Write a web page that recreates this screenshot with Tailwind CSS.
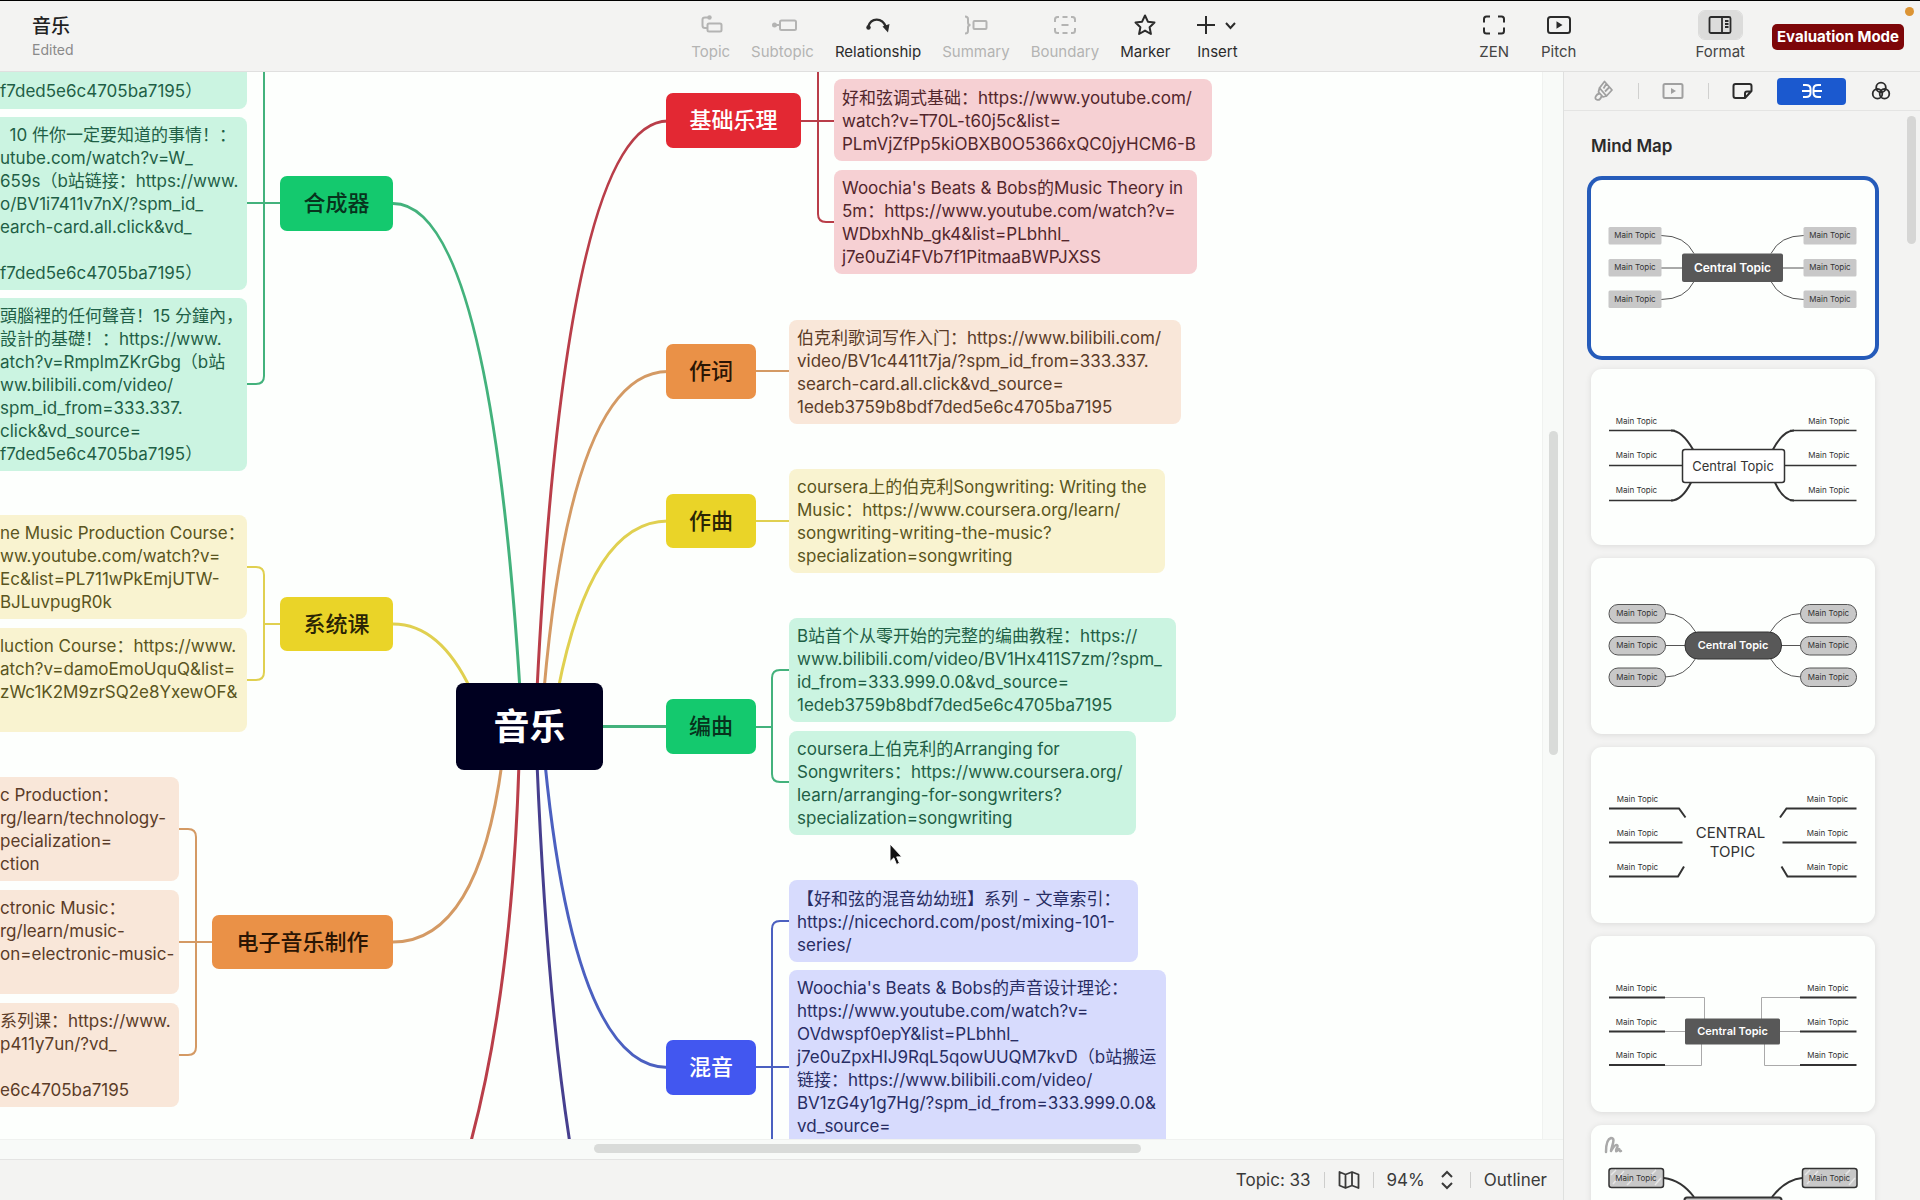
<!DOCTYPE html>
<html lang="zh-CN">
<head>
<meta charset="utf-8">
<meta name="viewport" content="width=device-width, initial-scale=1">
<title>音乐</title>
<script src="https://cdn.jsdelivr.net/npm/@tailwindcss/browser@4"></script>
</head>
<body class="flex h-screen flex-col overflow-hidden bg-[#f3f3f2] font-['Inter','Noto_Sans_CJK_SC',sans-serif] text-[#2b2b2b]">

<!-- Toolbar -->
<header class="relative flex h-[72px] shrink-0 items-start border-t border-b border-t-black border-b-[#e0e0df] pt-[10px]">
  <div class="w-[36%] pl-8">
    <h1 class="text-[19px] leading-8 font-medium text-[#222]">音乐</h1>
    <p class="text-sm leading-[14px] text-[#8a8a8a]">Edited</p>
  </div>
  <nav class="flex gap-[21px] text-[15px] leading-5">
    <button class="flex flex-col items-center gap-[3px] text-[#b4b4b3]" disabled>
      <svg class="h-7 w-7" viewBox="0 0 28 28" fill="none" stroke="currentColor" stroke-width="2"><rect x="10.500" y="12.500" width="14" height="8" rx="1.500"/><path d="M10.500 17H8Q5.500 17 5.500 14.500V8.500Q5.500 6.500 8 6.500H12.500"/><circle cx="12.500" cy="6.500" r="2.200" fill="currentColor" stroke="none"/></svg>
      Topic</button>
    <button class="flex flex-col items-center gap-[3px] text-[#b4b4b3]" disabled>
      <svg class="h-7 w-7" viewBox="0 0 28 28" fill="none" stroke="currentColor" stroke-width="2"><rect x="11" y="9.500" width="16" height="9.500" rx="1.500"/><path d="M5 14h6"/><circle cx="5.500" cy="14" r="2.500" fill="currentColor" stroke="none"/></svg>
      Subtopic</button>
    <button class="flex flex-col items-center gap-[3px]">
      <svg class="h-7 w-7" viewBox="0 0 28 28" fill="none" stroke="currentColor" stroke-width="2.200"><path d="M4 16C7 6.500 18 6 22 16"/><circle cx="4.500" cy="16.500" r="2.200" fill="currentColor" stroke="none"/><path d="M18.500 15.500l7-2.500-1.500 8.500z" fill="currentColor" stroke="none"/></svg>
      Relationship</button>
    <button class="flex flex-col items-center gap-[3px] text-[#b4b4b3]" disabled>
      <svg class="h-7 w-7" viewBox="0 0 28 28" fill="none" stroke="currentColor" stroke-width="2"><rect x="11.500" y="10" width="13" height="8" rx="1"/><path d="M3 5.500q3 0 3 2.500v3.500q0 2.500 2.500 2.500q-2.500 0-2.500 2.500V20q0 2.500-3 2.500"/></svg>
      Summary</button>
    <button class="flex flex-col items-center gap-[3px] text-[#b4b4b3]" disabled>
      <svg class="h-7 w-7" viewBox="0 0 28 28" fill="none" stroke="currentColor" stroke-width="2"><path d="M8 6H6.500Q4 6 4 8.500V11M11.500 6h5M20 6h1.500Q24 6 24 8.500V11M24 17v2.500q0 2.500-2.500 2.500H20M16.500 22h-5M8 22H6.500Q4 22 4 19.500V17M10.500 14h7"/></svg>
      Boundary</button>
    <button class="flex flex-col items-center gap-[3px]">
      <svg class="h-7 w-7" viewBox="0 0 28 28" fill="none" stroke="currentColor" stroke-width="2" stroke-linejoin="round"><path d="M14 4.500l2.900 6.200 6.600.8-4.900 4.700 1.300 6.800-5.900-3.400-5.900 3.400 1.300-6.800-4.900-4.700 6.600-.8z"/></svg>
      Marker</button>
    <button class="ml-1.5 flex flex-col items-center gap-[3px]">
      <svg class="h-7 w-10" viewBox="0 0 40 28" fill="none" stroke="currentColor" stroke-width="2"><path d="M0 14h18M9 5v18M29 12l4.500 5 4.500-5"/></svg>
      Insert</button>
  </nav>
  <div class="ml-auto flex text-[15px] leading-5">
    <button class="mr-8 flex flex-col items-center gap-[3px] text-[#444]">
      <svg class="h-7 w-7" viewBox="0 0 28 28" fill="none" stroke="#2b2b2b" stroke-width="2"><path d="M10 5.500H6.500Q4 5.500 4 8v3.500M18 5.500h3.500Q24 5.500 24 8v3.500M24 16.500V20q0 2.500-2.500 2.500H18M10 22.500H6.500Q4 22.500 4 20v-3.500"/></svg>
      ZEN</button>
    <button class="mr-[119px] flex flex-col items-center gap-[3px] text-[#444]">
      <svg class="h-7 w-7" viewBox="0 0 28 28" fill="none" stroke="#2b2b2b" stroke-width="2"><rect x="3" y="6" width="22" height="16" rx="2.500"/><path d="M11.500 10.200v7.600l6-3.800z" fill="#2b2b2b" stroke="none"/></svg>
      Pitch</button>
    <button class="mr-[27px] flex flex-col items-center gap-[3px] text-[#444]">
      <span class="flex h-7 w-[43px] items-center justify-center rounded-md bg-[#dcdcdb] outline outline-[#dcdcdb]">
      <svg class="h-7 w-7" viewBox="0 0 28 28" fill="none" stroke="#2b2b2b" stroke-width="1.800"><rect x="3.500" y="6" width="21" height="16" rx="1.500"/><path d="M16 6v16M19 10h3.500M19 13h3.500M19 16h3.500" /></svg></span>
      Format</button>
    <button class="mt-[13px] mr-4 h-[26px] rounded-[5px] bg-[#7d0609] px-[5px] text-[15px] font-bold text-white">Evaluation Mode</button>
  </div>
  <span class="absolute top-1.5 right-1.5 h-[9px] w-[9px] rounded-full bg-[#dc9434]"></span>
</header>

<div class="flex min-h-0 flex-1">
  <main class="flex min-w-0 flex-1 flex-col">
    <div class="flex min-h-0 flex-1 bg-[#f8faf8]">
      <!-- Mind map canvas: nodes sit at free positions -->
      <section class="relative min-w-0 flex-1 overflow-hidden bg-[#fdfffd] text-[17px] leading-[23px] whitespace-nowrap">
        <svg class="absolute top-0 left-0 h-[1067px] w-[1542px]" viewBox="0 72 1542 1067" fill="none" stroke-width="3">
          <path stroke="#43b27c" d="M393 203.500Q489 203.500 520 690M600 726.500H668"/>
          <path stroke="#b93e49" d="M668 121Q566 121 537 690M519 763Q512 990 470 1145"/>
          <path stroke="#d49a64" d="M668 371.500Q572 371.500 544 690M393 942Q478 942 502 763"/>
          <path stroke="#e0d050" d="M668 521Q591 521 558 690M393 624Q440 624 471 690"/>
          <path stroke="#4b60c0" d="M668 1067.500Q575 1067.500 545 763"/>
          <path stroke="#463f8e" d="M537 763Q547 1000 571 1150"/>
          <g stroke-width="2">
            <path stroke="#43b27c" d="M264 60V376Q264 384 256 384H247M247 203H280M756 727H772M789 670H780Q772 670 772 678V774Q772 782 780 782H789"/>
            <path stroke="#e0d050" d="M247 567H256Q264 567 264 575V672Q264 680 256 680H247M264 624H280M756 521H789"/>
            <path stroke="#d49a64" d="M179 829H188Q196 829 196 837V1047Q196 1055 188 1055H179M179 942H212M756 371H789"/>
            <path stroke="#b93e49" d="M818 60V214Q818 222 826 222H834M800 121H834"/>
            <path stroke="#4b60c0" d="M789 921H780Q772 921 772 929V1150M756 1067H789"/>
          </g>
        </svg>

        <!-- Left branch: synthesizers -->
        <div class="absolute top-[-68px] left-0 h-[105px] w-[247px] rounded-r-lg bg-[#cbf4e1] pt-[76px] text-[#1f5f46]">f7ded5e6c4705ba7195）</div>
        <div class="absolute top-[45px] left-0 w-[247px] rounded-r-lg bg-[#cbf4e1] pt-[7px] pb-[5px] text-[#1f5f46]">&nbsp;&nbsp;10 件你一定要知道的事情！：<br>utube.com/watch?v=W_<br>659s（b站链接：https://www.<br>o/BV1i7411v7nX/?spm_id_<br>earch-card.all.click&amp;vd_<br>&nbsp;<br>f7ded5e6c4705ba7195）</div>
        <div class="absolute top-[226px] left-0 w-[247px] rounded-r-lg bg-[#cbf4e1] pt-[7px] pb-[5px] text-[#1f5f46]">頭腦裡的任何聲音！15 分鐘內，<br>設計的基礎！：https://www.<br>atch?v=RmplmZKrGbg（b站<br>ww.bilibili.com/video/<br>spm_id_from=333.337.<br>click&amp;vd_source=<br>f7ded5e6c4705ba7195）</div>
        <div class="absolute top-[104px] left-[280px] flex h-[55px] w-[113px] items-center justify-center rounded-[7px] bg-[#14c96e] text-[22px] font-medium text-[#07331d]">合成器</div>

        <!-- Left branch: full courses -->
        <div class="absolute top-[443px] left-0 w-[247px] rounded-r-lg bg-[#f9f3d0] pt-[7px] pb-[5px] text-[#5a5520]">ne Music Production Course：<br>ww.youtube.com/watch?v=<br>Ec&amp;list=PL711wPkEmjUTW-<br>BJLuvpugR0k</div>
        <div class="absolute top-[556px] left-0 w-[247px] rounded-r-lg bg-[#f9f3d0] pt-[7px] pb-[5px] text-[#5a5520]">luction Course：https://www.<br>atch?v=damoEmoUquQ&amp;list=<br>zWc1K2M9zrSQ2e8YxewOF&amp;<br>&nbsp;</div>
        <div class="absolute top-[525px] left-[280px] flex h-[54px] w-[113px] items-center justify-center rounded-[7px] bg-[#ead428] text-[22px] font-medium text-[#2a2505]">系统课</div>

        <!-- Left branch: electronic music production -->
        <div class="absolute top-[705px] left-0 w-[179px] rounded-r-lg bg-[#f9e7d9] pt-[7px] pb-[5px] text-[#5b3c28]">c Production：<br>rg/learn/technology-<br>pecialization=<br>ction</div>
        <div class="absolute top-[818px] left-0 w-[179px] rounded-r-lg bg-[#f9e7d9] pt-[7px] pb-[5px] text-[#5b3c28]">ctronic Music：<br>rg/learn/music-<br>on=electronic-music-<br>&nbsp;</div>
        <div class="absolute top-[931px] left-0 w-[179px] rounded-r-lg bg-[#f9e7d9] pt-[7px] pb-[5px] text-[#5b3c28]">系列课：https://www.<br>p411y7un/?vd_<br>&nbsp;<br>e6c4705ba7195</div>
        <div class="absolute top-[843px] left-[212px] flex h-[54px] w-[181px] items-center justify-center rounded-[7px] bg-[#ea9147] text-[22px] font-medium text-[#2b1504]">电子音乐制作</div>

        <!-- Root -->
        <div class="absolute top-[611px] left-[456px] flex h-[87px] w-[147px] items-center justify-center rounded-lg bg-[#000020] text-4xl font-bold text-white">音乐</div>

        <!-- Right branch: music theory -->
        <div class="absolute top-[21px] left-[666px] flex h-[55px] w-[135px] items-center justify-center rounded-[7px] bg-[#e32833] text-[22px] font-medium text-white">基础乐理</div>
        <div class="absolute top-[7px] left-[834px] w-[378px] rounded-lg bg-[#f6d0d3] px-2 pt-2 pb-[5px] text-[#52262b]">好和弦调式基础：https://www.youtube.com/<br>watch?v=T70L-t60j5c&amp;list=<br>PLmVjZfPp5kiOBXB0O5366xQC0jyHCM6-B</div>
        <div class="absolute top-[98px] left-[834px] w-[363px] rounded-lg bg-[#f6d0d3] px-2 pt-[7px] pb-[5px] text-[#52262b]">Woochia's Beats &amp; Bobs的Music Theory in<br>5m：https://www.youtube.com/watch?v=<br>WDbxhNb_gk4&amp;list=PLbhhl_<br>j7e0uZi4FVb7f1PitmaaBWPJXSS</div>

        <!-- Right branch: lyrics -->
        <div class="absolute top-[272px] left-[666px] flex h-[55px] w-[90px] items-center justify-center rounded-[7px] bg-[#ea9147] text-[22px] font-medium text-[#2b1504]">作词</div>
        <div class="absolute top-[248px] left-[789px] w-[392px] rounded-lg bg-[#f9e7d9] px-2 pt-[7px] pb-[5px] text-[#5b3c28]">伯克利歌词写作入门：https://www.bilibili.com/<br>video/BV1c4411t7ja/?spm_id_from=333.337.<br>search-card.all.click&amp;vd_source=<br>1edeb3759b8bdf7ded5e6c4705ba7195</div>

        <!-- Right branch: composing -->
        <div class="absolute top-[422px] left-[666px] flex h-[54px] w-[90px] items-center justify-center rounded-[7px] bg-[#ead428] text-[22px] font-medium text-[#2a2505]">作曲</div>
        <div class="absolute top-[397px] left-[789px] w-[376px] rounded-lg bg-[#f9f3d0] px-2 pt-[7px] pb-[5px] text-[#5a5520]">coursera上的伯克利Songwriting: Writing the<br>Music：https://www.coursera.org/learn/<br>songwriting-writing-the-music?<br>specialization=songwriting</div>

        <!-- Right branch: arranging -->
        <div class="absolute top-[627px] left-[666px] flex h-[55px] w-[90px] items-center justify-center rounded-[7px] bg-[#14c96e] text-[22px] font-medium text-[#07331d]">编曲</div>
        <div class="absolute top-[546px] left-[789px] w-[387px] rounded-lg bg-[#cbf4e1] px-2 pt-[7px] pb-[5px] text-[#1f5f46]">B站首个从零开始的完整的编曲教程：https://<br>www.bilibili.com/video/BV1Hx411S7zm/?spm_<br>id_from=333.999.0.0&amp;vd_source=<br>1edeb3759b8bdf7ded5e6c4705ba7195</div>
        <div class="absolute top-[659px] left-[789px] w-[347px] rounded-lg bg-[#cbf4e1] px-2 pt-[7px] pb-[5px] text-[#1f5f46]">coursera上伯克利的Arranging for<br>Songwriters：https://www.coursera.org/<br>learn/arranging-for-songwriters?<br>specialization=songwriting</div>

        <!-- Right branch: mixing -->
        <div class="absolute top-[968px] left-[666px] flex h-[55px] w-[90px] items-center justify-center rounded-[7px] bg-[#4257f0] text-[22px] font-medium text-white">混音</div>
        <div class="absolute top-[808px] left-[789px] w-[349px] rounded-lg bg-[#d7dbfd] px-2 pt-2 pb-[5px] text-[#282d63]">【好和弦的混音幼幼班】系列 - 文章索引：<br>https://nicechord.com/post/mixing-101-<br>series/</div>
        <div class="absolute top-[898px] left-[789px] h-[195px] w-[377px] rounded-lg bg-[#d7dbfd] px-2 pt-[7px] text-[#282d63]">Woochia's Beats &amp; Bobs的声音设计理论：<br>https://www.youtube.com/watch?v=<br>OVdwspf0epY&amp;list=PLbhhl_<br>j7e0uZpxHIJ9RqL5qowUUQM7kvD（b站搬运<br>链接：https://www.bilibili.com/video/<br>BV1zG4y1g7Hg/?spm_id_from=333.999.0.0&amp;<br>vd_source=</div>

        <svg class="absolute top-[771px] left-[889px] h-6 w-4" viewBox="0 0 16 24"><path d="M1 1v17.500l3.800-3.600 2.700 6.600 3-1.300-2.800-6.300h5.300z" fill="#111" stroke="#fff"/></svg>
      </section>
      <div class="flex w-[21px] justify-center border-l border-[#f0f2f0]">
        <div class="mt-[359px] h-[324px] w-[9px] rounded-full bg-[#d9dbd9]"></div>
      </div>
    </div>
    <div class="h-5 shrink-0 border-t border-[#f0f2f0] bg-[#f8faf8] pt-1">
      <div class="ml-[38%] h-[9px] w-[35%] rounded-full bg-[#d9dbd9]"></div>
    </div>
    <footer class="flex h-[41px] shrink-0 items-center justify-end gap-[13px] border-t border-[#e4e4e3] pr-4 text-[17px] leading-6 text-[#3a3a3a]">
      <span>Topic: 33</span>
      <span class="h-4 w-px bg-[#cdcdcc]"></span>
      <button aria-label="Map"><svg class="h-[22px] w-[22px]" viewBox="0 0 22 22" fill="none" stroke="currentColor" stroke-width="1.800" stroke-linejoin="round"><path d="M1.500 3l6 2.500 6.500-2.500 6.500 2.500V19L14 16.500 7.500 19l-6-2.500zM7.500 5.500V19M14 3v13.500"/></svg></button>
      <span class="h-4 w-px bg-[#cdcdcc]"></span>
      <button class="flex items-center gap-4 pr-1">94%
        <svg class="h-5 w-3" viewBox="0 0 12 20" fill="none" stroke="currentColor" stroke-width="2"><path d="M1 7l5-5 5 5M1 13l5 5 5-5"/></svg></button>
      <span class="h-4 w-px bg-[#cdcdcc]"></span>
      <button>Outliner</button>
    </footer>
  </main>

  <!-- Format panel -->
  <aside class="relative flex w-[357px] shrink-0 flex-col border-l border-[#dfe0df]">
    <div class="flex h-[39px] shrink-0 items-center border-b border-[#e4e4e3] px-[5px]">
      <button class="flex flex-1 justify-center text-[#a0a0a0]" aria-label="Style"><svg class="h-6 w-6" viewBox="0 0 24 24" fill="none" stroke="currentColor" stroke-width="1.800" stroke-linejoin="round"><path d="M13.500 2.500l7.500 8.500-5.500 6-7-8zM8.500 9l-1 4 4.500 5 3.500-1M15.500 4.500l-3 5M18.500 8l-4.500 4.500M8.500 14.500q-2.500.5-3.500 2.500-1.500 2.500.5 3.500t3.500-.5 1.500-3.500"/></svg></button>
      <span class="h-4 w-px bg-[#d0d0cf]"></span>
      <button class="flex flex-1 justify-center text-[#a0a0a0]" aria-label="Pitch"><svg class="h-6 w-6" viewBox="0 0 24 24" fill="none" stroke="currentColor" stroke-width="2"><rect x="2.500" y="5" width="19" height="14" rx="1.500"/><path d="M10 9v6l5-3z" fill="currentColor" stroke="none"/></svg></button>
      <span class="h-4 w-px bg-[#d0d0cf]"></span>
      <button class="flex flex-1 justify-center" aria-label="Stickers"><svg class="h-6 w-6" viewBox="0 0 24 24" fill="none" stroke="currentColor" stroke-width="2" stroke-linejoin="round"><path d="M4.500 5h14q2 0 2 2V12l-6.500 7h-9.500q-2 0-2-2V7q0-2 2-2zM20.500 12.500h-4.500q-2 0-2 2V18.500"/></svg></button>
      <button class="flex h-[27px] flex-1 items-center justify-center rounded bg-[#1b59cf] text-white" aria-label="Structure"><svg class="h-6 w-6" viewBox="0 0 24 24" fill="none" stroke="currentColor" stroke-width="2"><path d="M3 6h3q4.500 0 4.500 4v4q0 4-4.500 4H3M2 12h8.500M21 6h-3q-4.500 0-4.500 4v4q0 4 4.500 4h3M22 12h-8.500"/></svg></button>
      <button class="flex flex-1 justify-center" aria-label="Colors"><svg class="h-6 w-6" viewBox="0 0 24 24" fill="none" stroke="currentColor" stroke-width="1.800"><circle cx="12" cy="8.500" r="4.800"/><circle cx="8.500" cy="14.800" r="4.800"/><circle cx="15.500" cy="14.800" r="4.800"/></svg></button>
    </div>

    <div class="min-h-0 flex-1 overflow-hidden pr-[45px] pl-[27px]">
      <h2 class="pt-[23px] pb-[22px] text-[17px] leading-6 font-semibold">Mind Map</h2>
      <div class="flex flex-col gap-[13px]">
        <button class="rounded-[11px] bg-[#fdfffd] ring-4 ring-[#255bba]" aria-label="Mind map, curved">
          <svg class="w-full" viewBox="0 0 284 176" fill="none" text-anchor="middle" font-size="8">
            <path stroke="#555" d="M70 55.500q24 0 33 18M70 88h22M70 119.500q24 0 33-18M213 55.500q-24 0-33 18M213 88h-22M213 119.500q-24 0-33-18"/>
            <g fill="#c8c8c8"><rect x="17.500" y="47" width="53" height="17.500" rx="1.500"/><rect x="17.500" y="79" width="53" height="17.500" rx="1.500"/><rect x="17.500" y="110.500" width="53" height="17.500" rx="1.500"/><rect x="212.500" y="47" width="53" height="17.500" rx="1.500"/><rect x="212.500" y="79" width="53" height="17.500" rx="1.500"/><rect x="212.500" y="110.500" width="53" height="17.500" rx="1.500"/></g>
            <rect x="91" y="73.500" width="101" height="28.500" rx="2" fill="#585858"/>
            <g fill="#333"><text x="44" y="58">Main Topic</text><text x="44" y="90">Main Topic</text><text x="44" y="122">Main Topic</text><text x="239" y="58">Main Topic</text><text x="239" y="90">Main Topic</text><text x="239" y="122">Main Topic</text></g>
            <text x="141.500" y="92" fill="#fff" font-size="12" font-weight="600">Central Topic</text>
          </svg>
        </button>
        <button class="rounded-[11px] bg-[#fdfffd] shadow-[0_1px_6px_#0000001a]" aria-label="Mind map, underlined">
          <svg class="w-full" viewBox="0 0 284 176" fill="none" text-anchor="middle" font-size="8">
            <path stroke="#333" stroke-width="1.500" d="M18 61.500H84M18 96.500H91M18 131.500H82M265.500 61.500H199M265.500 96.500H193M265.500 131.500H199"/>
            <path stroke="#333" stroke-width="2" d="M80 61.500q11 0 22 19M80 131.500q11 0 20-18M203 61.500q-11 0-21 19M203 131.500q-11 0-19-18"/>
            <rect x="91.500" y="80.500" width="102" height="33" rx="2.500" fill="#fff" stroke="#333" stroke-width="1.500"/>
            <g fill="#333"><text x="45.500" y="54.500">Main Topic</text><text x="45.500" y="89">Main Topic</text><text x="45.500" y="124">Main Topic</text><text x="238" y="54.500">Main Topic</text><text x="238" y="89">Main Topic</text><text x="238" y="124">Main Topic</text></g>
            <text x="142" y="101.500" fill="#333" font-size="13">Central Topic</text>
          </svg>
        </button>
        <button class="rounded-[11px] bg-[#fdfffd] shadow-[0_1px_6px_#0000001a]" aria-label="Mind map, rounded">
          <svg class="w-full" viewBox="0 0 284 176" fill="none" text-anchor="middle" font-size="8">
            <path stroke="#555" d="M74 55.500q20 0 31 19M74 87.500h20M74 119q20 0 31-19M210 55.500q-20 0-31 19M210 87.500h-20M210 119q-20 0-31-19"/>
            <g fill="#c8c8c8" stroke="#555"><rect x="18" y="46.500" width="56.500" height="18.500" rx="9"/><rect x="18" y="78.500" width="56.500" height="18.500" rx="9"/><rect x="18" y="110" width="56.500" height="18.500" rx="9"/><rect x="209.500" y="46.500" width="56" height="18.500" rx="9"/><rect x="209.500" y="78.500" width="56" height="18.500" rx="9"/><rect x="209.500" y="110" width="56" height="18.500" rx="9"/></g>
            <rect x="94" y="74" width="96.500" height="27" rx="13" fill="#585858" stroke="#333"/>
            <g fill="#333"><text x="46" y="58">Main Topic</text><text x="46" y="90">Main Topic</text><text x="46" y="122">Main Topic</text><text x="237.500" y="58">Main Topic</text><text x="237.500" y="90">Main Topic</text><text x="237.500" y="122">Main Topic</text></g>
            <text x="142" y="91" fill="#fff" font-size="11" font-weight="600">Central Topic</text>
          </svg>
        </button>
        <button class="rounded-[11px] bg-[#fdfffd] shadow-[0_1px_6px_#0000001a]" aria-label="Mind map, plain">
          <svg class="w-full" viewBox="0 0 284 176" fill="none" text-anchor="middle" font-size="8">
            <path stroke="#333" stroke-width="2" d="M18 61.500H88l6.500 9M18 95.500H91.500M18 129.500H87l6-10M265.500 61.500H195.500l-6.500 9M265.500 95.500H191.500M265.500 129.500H196.500l-6-10"/>
            <g fill="#333"><text x="46.500" y="54.500">Main Topic</text><text x="46.500" y="88.500">Main Topic</text><text x="46.500" y="122.500">Main Topic</text><text x="236.500" y="54.500">Main Topic</text><text x="236.500" y="88.500">Main Topic</text><text x="236.500" y="122.500">Main Topic</text></g>
            <g fill="#333" font-size="15"><text x="139.500" y="91">CENTRAL</text><text x="141.500" y="110">TOPIC</text></g>
          </svg>
        </button>
        <button class="rounded-[11px] bg-[#fdfffd] shadow-[0_1px_6px_#0000001a]" aria-label="Mind map, right angled">
          <svg class="w-full" viewBox="0 0 284 176" fill="none" text-anchor="middle" font-size="8">
            <path stroke="#aaa" d="M74 61.500H113.500V84M74 95.500H95M74 129.500H110.500V106M209 61.500H170.500V84M209 95.500H188M209 129.500H173.500V106"/>
            <path stroke="#333" stroke-width="2" d="M18 61.500H74M18 95.500H74M18 129H74M209 61.500H265.500M209 95.500H265.500M209 129H265.500"/>
            <rect x="94" y="82.500" width="95" height="26" rx="1.500" fill="#585858"/>
            <g fill="#333"><text x="45.500" y="54.500">Main Topic</text><text x="45.500" y="88.500">Main Topic</text><text x="45.500" y="122">Main Topic</text><text x="237" y="54.500">Main Topic</text><text x="237" y="88.500">Main Topic</text><text x="237" y="122">Main Topic</text></g>
            <text x="141.500" y="99" fill="#fff" font-size="11" font-weight="600">Central Topic</text>
          </svg>
        </button>
        <button class="rounded-[11px] bg-[#fdfffd] shadow-[0_1px_6px_#0000001a]" aria-label="Mind map, hand drawn">
          <svg class="w-full" viewBox="0 0 284 176" fill="none" text-anchor="middle" font-size="8">
            <path stroke="#a9a9a9" stroke-width="2.500" stroke-linecap="round" stroke-linejoin="round" d="M15 27c0-7 1-13 5-14 5 0 1 7 0 13 2-3 4-7 6-6s-2 5-1 6 2-2 3-2 0 3 2 2"/>
            <path stroke="#333" stroke-width="2" d="M73 53q17 2 30 19M211 53q-17 2-30 19"/>
            <g fill="#c8c8c8" stroke="#333" stroke-width="1.500"><rect x="18" y="43.500" width="54.500" height="19" rx="2.500"/><rect x="211.500" y="43.500" width="54.500" height="19" rx="2.500"/></g>
            <path stroke="#e6e6e6" stroke-width="1.500" d="M20 50l5-5M22 59l11-13M36 60l6-6M60 50l5-5M64 60l6-7M214 50l5-5M216 59l11-13M254 50l5-5M258 60l6-7"/>
            <rect x="93.500" y="72.500" width="97" height="28" rx="2.500" fill="#c8c8c8" stroke="#333" stroke-width="2"/>
            <g fill="#333"><text x="45" y="55.500">Main Topic</text><text x="238.500" y="55.500">Main Topic</text></g>
          </svg>
        </button>
      </div>
    </div>
    <div class="absolute top-11 right-1 h-[128px] w-[9px] rounded-full bg-[#d6d6d5]"></div>
  </aside>
</div>
</body>
</html>
